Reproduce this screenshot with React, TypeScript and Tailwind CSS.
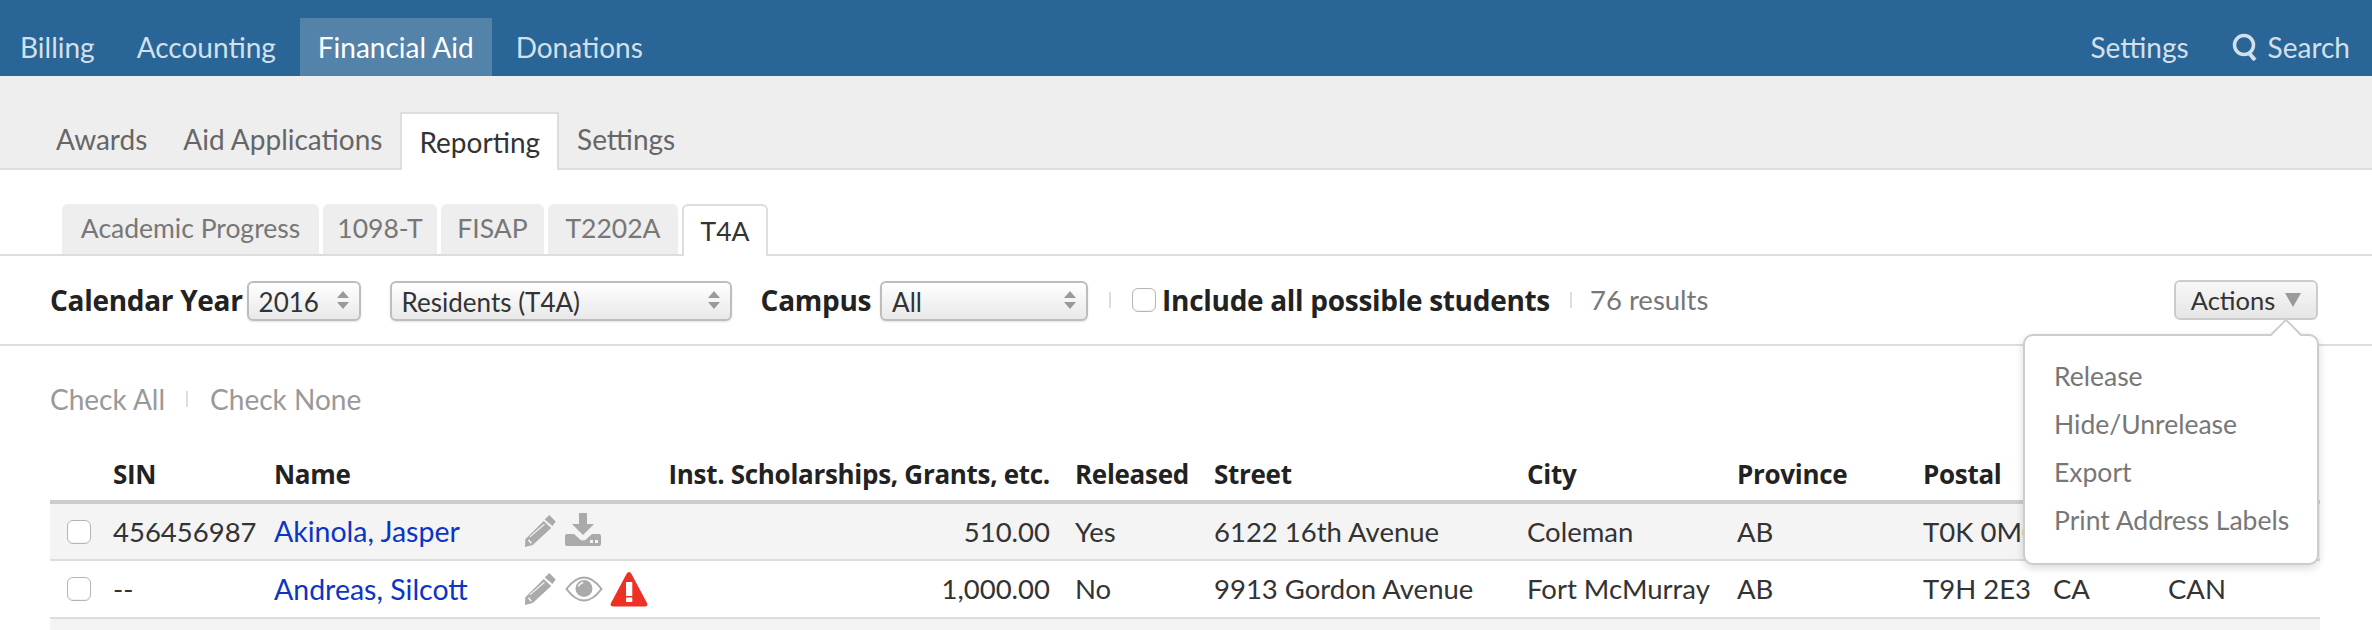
import React from 'react';

const font = { fontFamily: 'Lato, "Open Sans", sans-serif' };

const PencilIcon = () => (
    <svg viewBox="0 0 34 34" className="w-[33px] h-[33px] shrink-0" fill="#aaaaaa">
        <path d="M25 0 L31.7 6.7 L28.3 11.3 L20.3 4.7 Z" />
        <path d="M19.3 6.3 L27 13.3 L8 31 L0 33 L0.3 25 Z" />
        <path d="M5 22.5 L20 9.5" stroke="#f4f4f4" strokeWidth="1.2" fill="none" />
        <path d="M3.5 25.5 L6.5 29" stroke="#f4f4f4" strokeWidth="1.6" fill="none" />
    </svg>
);

const DownloadIcon = () => (
    <svg viewBox="0 0 36 34" className="mb-[4px] w-[36px] h-[34px] shrink-0" fill="#aaaaaa">
        <path d="M14 0 H22 V11 H29 L18 22 L7 11 H14 Z" />
        <path d="M2 21 H9 L15 26.5 Q18 28.5 21 26.5 L27 21 H34 Q36 21 36 23 V31 Q36 33 34 33 H2 Q0 33 0 31 V23 Q0 21 2 21 Z M25 27 V30 H28 V27 Z M30 27 V30 H33 V27 Z" fillRule="evenodd" />
    </svg>
);

const EyeIcon = () => (
    <svg viewBox="0 0 38 26" className="w-[38px] h-[26px] shrink-0">
        <path d="M1.5 13 Q10 1.5 19 1.5 Q28 1.5 36.5 13 Q28 24.5 19 24.5 Q10 24.5 1.5 13 Z" fill="none" stroke="#aaaaaa" strokeWidth="2" />
        <circle cx="19" cy="12.5" r="8.5" fill="#aaaaaa" />
        <path d="M12.5 10 Q14.5 6 18.5 5.5 L18 7.5 Q15 8 14 11 Z" fill="#eeeeee" />
    </svg>
);

const WarningIcon = () => (
    <svg viewBox="0 0 38 36" className="w-[38px] h-[36px] shrink-0">
        <path d="M19 1 Q20.5 1 21.5 3 L37 32 Q38.5 35.5 35 35.5 H3 Q-0.5 35.5 1 32 L16.5 3 Q17.5 1 19 1 Z" fill="#ee3124" />
        <rect x="16" y="11" width="6.3" height="14" fill="#ffffff" />
        <rect x="16" y="26.5" width="6.3" height="4.5" fill="#ffffff" />
    </svg>
);

const SearchIcon = () => (
    <svg viewBox="0 0 26 28" className="w-[26px] h-[28px]" fill="none" stroke="#d3e0ea">
        <circle cx="12" cy="12" r="9.5" strokeWidth="3.5" />
        <path d="M17 20 L23 27" strokeWidth="4" />
    </svg>
);

const Select = ({ value, widthClass }: { value: string; widthClass: string }) => (
    <div className={`relative h-[40px] shrink-0 ${widthClass}`}>
        <select
            defaultValue={value}
            className="w-full h-full appearance-none rounded-[6px] border-2 border-[#bdbdbd] bg-linear-to-b from-white to-[#e9e9e9] pl-[10px] text-[26px] text-[#333333] shadow-[0_1px_2px_rgba(0,0,0,0.12)] outline-none"
        >
            <option>{value}</option>
        </select>
        <svg viewBox="0 0 12 18" className="absolute right-[12px] top-[11px] w-[12px] h-[18px]" fill="#9a9a9a">
            <path d="M6 0 L12 7 H0 Z M0 11 H12 L6 18 Z" />
        </svg>
    </div>
);

const Checkbox = () => (
    <span className="block w-[24px] h-[24px] shrink-0 rounded-[6px] border border-[#b5b5b5] bg-white shadow-[inset_0_-1px_1px_rgba(0,0,0,0.06)]" />
);

const subTabs = [
    { label: 'Academic Progress', width: 'w-[257px]' },
    { label: '1098-T', width: 'w-[114px]' },
    { label: 'FISAP', width: 'w-[103px]' },
    { label: 'T2202A', width: 'w-[130px]' },
];

const headers = ['', 'SIN', 'Name', '', 'Inst. Scholarships, Grants, etc.', 'Released', 'Street', 'City', 'Province', 'Postal', '', ''];
const colWidths = ['w-[55px]', 'w-[161px]', 'w-[251px]', 'w-[140px]', 'w-[410px]', 'w-[139px]', 'w-[313px]', 'w-[210px]', 'w-[186px]', 'w-[130px]', 'w-[115px]', 'w-[160px]'];

const rows = [
    { sin: '456456987', name: 'Akinola, Jasper', amount: '510.00', released: 'Yes', street: '6122 16th Avenue', city: 'Coleman', postal: 'T0K 0M0', second: <DownloadIcon />, warn: false },
    { sin: '--', name: 'Andreas, Silcott', amount: '1,000.00', released: 'No', street: '9913 Gordon Avenue', city: 'Fort McMurray', postal: 'T9H 2E3', second: <EyeIcon />, warn: true },
];

const labelClass = "font-['Open_Sans'] text-[28px] font-bold tracking-[-0.3px] text-[#222222] whitespace-nowrap";

export default function App() {
    return (
        <div style={font} className="relative h-[630px] overflow-hidden bg-white text-[28px] text-[#333333]">
            {/* Top nav */}
            <div className="flex h-[76px] items-end justify-between bg-[#296596] pl-[2px] pr-[22px] text-[#d3e0ea]">
                <div className="flex gap-[6px]">
                    <a className="flex h-[58px] items-center px-[18px]">Billing</a>
                    <a className="flex h-[58px] items-center px-[18px]">Accounting</a>
                    <a className="flex h-[58px] items-center bg-[#5483aa] px-[18px] text-white">Financial Aid</a>
                    <a className="flex h-[58px] items-center px-[18px]">Donations</a>
                </div>
                <div className="flex h-[58px] items-center">
                    <a className="mr-[43px]">Settings</a>
                    <SearchIcon />
                    <a className="ml-[10px]">Search</a>
                </div>
            </div>

            {/* Section tabs */}
            <div className="flex h-[94px] items-end border-b-2 border-[#dddddd] bg-[#eeeeee] pl-[38px] text-[#666666]">
                <a className="flex h-[58px] items-center px-[18px]">Awards</a>
                <a className="flex h-[58px] items-center px-[18px]">Aid Applications</a>
                <a className="-mb-[2px] flex h-[58px] items-center border-2 border-b-0 border-[#dddddd] bg-white px-[17px] text-[#333333]">Reporting</a>
                <a className="flex h-[58px] items-center px-[18px]">Settings</a>
            </div>

            {/* Report tabs */}
            <div className="flex h-[86px] items-end gap-[4px] border-b-2 border-[#dddddd] pl-[62px] text-[26.5px] text-[#777777]">
                {subTabs.map(tab => (
                    <a key={tab.label} className={`flex h-[50px] items-center justify-center rounded-t-[6px] bg-[#eeeeee] ${tab.width}`}>{tab.label}</a>
                ))}
                <a className="-mb-[2px] flex h-[52px] w-[86px] items-center justify-center rounded-t-[6px] border-2 border-b-0 border-[#dddddd] bg-white pt-[2px] text-[#333333]">T4A</a>
            </div>

            {/* Filters */}
            <div className="flex h-[90px] items-center border-b-2 border-[#dddddd] pl-[50px] pr-[54px]">
                <span className={`mr-[4px] ${labelClass}`}>Calendar Year</span>
                <Select value="2016" widthClass="w-[114px]" />
                <div className="w-[29px]" />
                <Select value="Residents (T4A)" widthClass="w-[342px]" />
                <span className={`ml-[29px] mr-[9px] ${labelClass}`}>Campus</span>
                <Select value="All" widthClass="w-[208px]" />
                <span className="ml-[21px] mr-[21px] h-[16px] w-[2px] bg-[#dddddd]" />
                <Checkbox />
                <span className={`ml-[6px] ${labelClass}`}>Include all possible students</span>
                <span className="ml-[20px] mr-[18px] h-[16px] w-[2px] bg-[#dddddd]" />
                <span className="text-[27.5px] text-[#777777]">76 results</span>
                <button className="ml-auto flex h-[40px] w-[144px] items-center justify-center gap-[10px] rounded-[6px] border-2 border-[#cccccc] bg-linear-to-b from-[#f8f8f8] to-[#e6e6e6] text-[25.5px]">
                    Actions
                    <svg viewBox="0 0 16 14" className="w-[16px] h-[14px]" fill="#9a9a9a"><path d="M0 0 H16 L8 14 Z" /></svg>
                </button>
            </div>

            {/* Check links */}
            <div className="flex h-[106px] items-center pl-[50px] text-[#999999]">
                <a>Check All</a>
                <span className="ml-[21px] mr-[22px] h-[16px] w-[2px] bg-[#dddddd]" />
                <a>Check None</a>
            </div>

            {/* Table */}
            <div className="ml-[50px] w-[2270px] text-[27.5px]">
                <table className="w-full table-fixed border-collapse">
                    <colgroup>
                        {colWidths.map((w, i) => <col key={i} className={w} />)}
                    </colgroup>
                    <thead>
                        <tr className="h-[50px] border-b-4 border-[#cccccc]">
                            {headers.map((h, i) => (
                                <th key={i} className={`whitespace-nowrap pb-[4px] font-['Open_Sans'] text-[26px] font-bold tracking-[-0.3px] text-[#222222] ${i === 4 ? 'pr-[17px] text-right' : 'pl-[8px] text-left'}`}>{h}</th>
                            ))}
                        </tr>
                    </thead>
                    <tbody>
                        {rows.map((row, i) => (
                            <tr key={row.name} className={`h-[58px] border-b-2 border-[#dddddd] ${i === 0 ? 'bg-[#f4f4f4]' : 'bg-white'}`}>
                                <td className="pl-[17px]"><Checkbox /></td>
                                <td className="pl-[8px]">{row.sin}</td>
                                <td className="pl-[8px] text-[28.5px] text-[#0b35c4]">{row.name}</td>
                                <td className="pl-[8px]">
                                    <div className="flex items-center gap-[7px]">
                                        <PencilIcon />
                                        {row.second}
                                        {row.warn && <WarningIcon />}
                                    </div>
                                </td>
                                <td className="pr-[17px] text-right">{row.amount}</td>
                                <td className="pl-[8px]">{row.released}</td>
                                <td className="pl-[8px]">{row.street}</td>
                                <td className="pl-[8px] whitespace-nowrap">{row.city}</td>
                                <td className="pl-[8px]">AB</td>
                                <td className="pl-[8px] whitespace-nowrap">{row.postal}</td>
                                <td className="pl-[8px]">CA</td>
                                <td className="pl-[8px]">CAN</td>
                            </tr>
                        ))}
                        <tr className="h-[58px] bg-[#f4f4f4]"><td colSpan={12} /></tr>
                    </tbody>
                </table>
            </div>

            {/* Actions menu */}
            <div className="absolute left-[2023px] top-[334px] w-[296px] h-[231px] rounded-[10px] border-2 border-[#cccccc] bg-white py-[17px] pl-[29px] text-[26.5px] text-[#777777] shadow-[0_3px_8px_rgba(0,0,0,0.15)]">
                <div className="absolute right-[20px] -top-[13px] h-[22px] w-[22px] rotate-45 border-l-2 border-t-2 border-[#cccccc] bg-white" />
                <div className="flex flex-col">
                    <a className="flex h-[48px] items-center">Release</a>
                    <a className="flex h-[48px] items-center">Hide/Unrelease</a>
                    <a className="flex h-[48px] items-center">Export</a>
                    <a className="flex h-[48px] items-center whitespace-nowrap">Print Address Labels</a>
                </div>
            </div>
        </div>
    );
}
